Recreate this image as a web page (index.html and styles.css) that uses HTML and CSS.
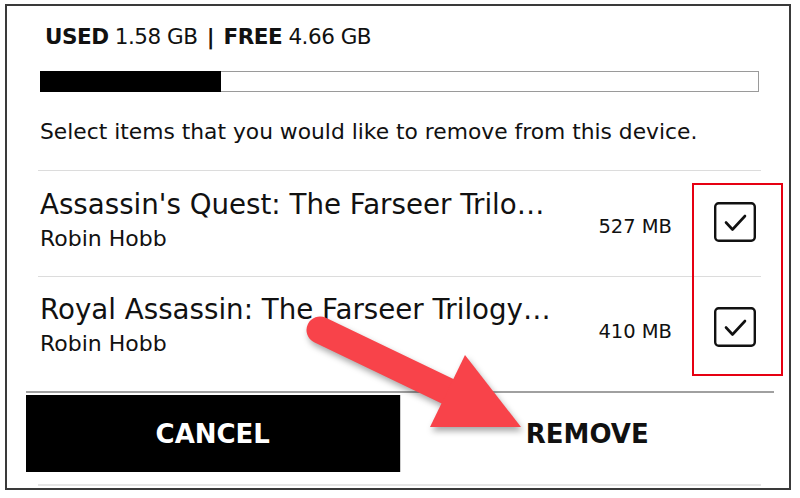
FILE: index.html
```html
<!DOCTYPE html>
<html>
<head>
<meta charset="utf-8">
<link rel="stylesheet" href="styles.css">
</head>
<body>
<div class="frame">
  <div class="top">
    <div class="storage"><b>USED</b> 1.58 GB <span class="pipe">|</span> <b>FREE</b> 4.66 GB</div>
    <div class="bar"><div class="fill"></div></div>
    <div class="hint">Select items that you would like to remove from this device.</div>
  </div>
  <div class="list">
    <div class="row">
      <div class="info">
        <div class="title">Assassin's Quest: The Farseer Trilo…</div>
        <div class="author">Robin Hobb</div>
      </div>
      <div class="size">527 MB</div>
      <div class="check">
        <svg viewBox="0 0 42 40" width="42" height="40"><rect x="1.2" y="1.2" width="39.6" height="37.6" rx="3.5" fill="none" stroke="#111" stroke-width="2.4"/><path d="M12 20.5 L18.5 27.5 L31 14" fill="none" stroke="#111" stroke-width="2.6" stroke-linecap="round" stroke-linejoin="round"/></svg>
      </div>
    </div>
    <div class="row">
      <div class="info">
        <div class="title">Royal Assassin: The Farseer Trilogy…</div>
        <div class="author">Robin Hobb</div>
      </div>
      <div class="size">410 MB</div>
      <div class="check">
        <svg viewBox="0 0 42 40" width="42" height="40"><rect x="1.2" y="1.2" width="39.6" height="37.6" rx="3.5" fill="none" stroke="#111" stroke-width="2.4"/><path d="M12 20.5 L18.5 27.5 L31 14" fill="none" stroke="#111" stroke-width="2.6" stroke-linecap="round" stroke-linejoin="round"/></svg>
      </div>
    </div>
  </div>
  <div class="actions">
    <div class="btn cancel">CANCEL</div>
    <div class="btn remove">REMOVE</div>
  </div>
  <div class="bottom-rule"></div>
</div>
<div class="highlight"></div>
<svg class="arrow" width="800" height="498" viewBox="0 0 800 498">
  <g class="arrow-shape">
    <line x1="320" y1="330" x2="447" y2="391" stroke="#f8434a" stroke-width="27" stroke-linecap="round"/>
    <polygon points="465,355 430,427 521,427" fill="#f8434a"/>
  </g>
</svg>
</body>
</html>
```

FILE: styles.css
```css
* { box-sizing: border-box; }
html, body { margin: 0; padding: 0; background: #fff; }
body {
  font-family: "DejaVu Sans", "Open Sans", sans-serif;
  color: #111;
  width: 800px;
  height: 498px;
  position: relative;
  overflow: hidden;
}
.frame {
  margin: 4px 0 0 5px;
  width: 786px;
  height: 486px;
  border: 2px solid #3a3a3a;
  display: flex;
  flex-direction: column;
}
.top {
  padding: 17px 28px 0 33px;
}
.storage {
  font-size: 21.5px;
  line-height: 28px;
  padding-left: 5px;
  letter-spacing: -0.5px;
}
.storage b { font-weight: 700; }
.pipe { font-weight: 700; padding: 0 3px; }
.bar {
  margin-top: 20px;
  height: 21px;
  border: 1px solid #9a9a9a;
  background: #fff;
  margin-right: 2px;
}
.fill {
  width: 181px;
  background: #000;
  margin: -1px 0 0 -1px;
  height: 21px;
}
.hint {
  margin-top: 27px;
  font-size: 21.8px;
  line-height: 26px;
}
.list {
  margin: 25px 28px 0 31px;
  border-top: 1px solid #dcdcdc;
}
.row {
  display: flex;
  align-items: flex-start;
  height: 105px;
  padding: 18px 5px 0 2px;
}
.row + .row { border-top: 1px solid #dcdcdc; height: 104px; padding-top: 17px; }
.info { flex: 1; }
.title {
  font-size: 27.7px;
  line-height: 32px;
  white-space: nowrap;
}
.author {
  font-size: 22px;
  line-height: 26px;
  margin-top: 5px;
}
.size {
  font-size: 19.5px;
  line-height: 24px;
  margin-top: 26px;
  margin-right: 42px;
}
.check {
  width: 42px;
  height: 40px;
  margin-top: 13px;
}
.check svg { display: block; }
.actions {
  margin: 11px 15px 0 19px;
  border-top: 2px solid #a0a0a0;
  padding-top: 2px;
  display: flex;
}
.btn {
  flex: 1;
  height: 77px;
  display: flex;
  align-items: center;
  justify-content: center;
  font-size: 26px;
  font-weight: 700;
}
.cancel { background: #000; color: #fff; }
.remove { color: #111; border-left: 1px solid #ccc; }
.bottom-rule {
  margin: 12px 28px 0 31px;
  border-top: 2px solid #e6e6e6;
}
.highlight {
  position: absolute;
  left: 692px;
  top: 183px;
  width: 91px;
  height: 193px;
  border: 2px solid #e60012;
}
.arrow {
  position: absolute;
  left: 0;
  top: 0;
  pointer-events: none;
}
.arrow-shape {
  filter: drop-shadow(2px 4px 3px rgba(0,0,0,0.35));
}
```
